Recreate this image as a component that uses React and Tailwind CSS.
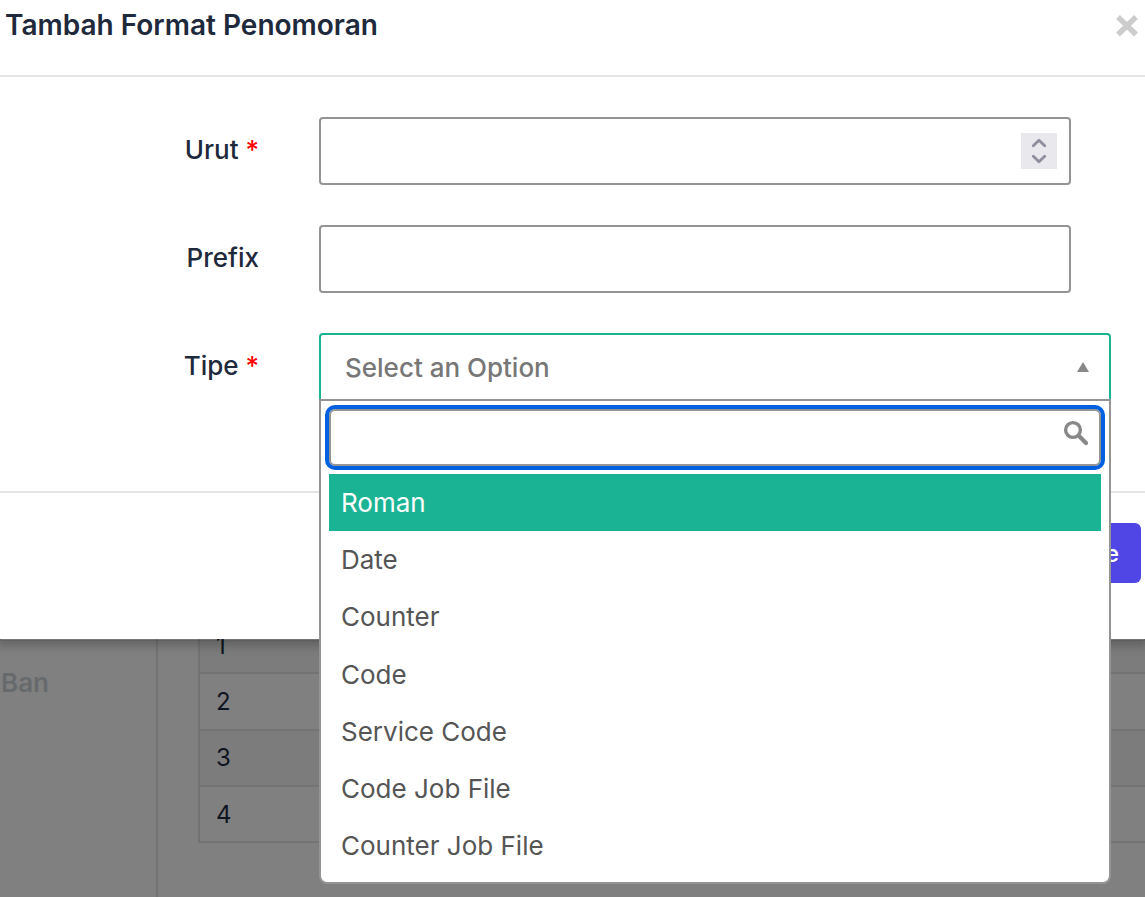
import React from 'react';

const options = ['Roman', 'Date', 'Counter', 'Code', 'Service Code', 'Code Job File', 'Counter Job File'];

function Label({ children, required }) {
  return (
    <div className="w-[259px] shrink-0 pt-[13px] text-right text-[26px] leading-[39px] font-medium whitespace-nowrap text-[#1e293b]">
      {children}
      {required && <span className="text-[#ff0000]"> *</span>}
    </div>
  );
}

function Stepper() {
  return (
    <div className="flex size-9 items-center justify-center bg-[#e9e9ed]">
      <svg width="36" height="36" viewBox="0 0 36 36" fill="none" stroke="#8f8f9d" strokeWidth="2.9" strokeLinecap="round" strokeLinejoin="round">
        <path d="M12.3 12.8 18 7.3 23.7 12.8" />
        <path d="M12.3 23.2 18 28.7 23.7 23.2" />
      </svg>
    </div>
  );
}

function Dropdown() {
  return (
    <div className="absolute top-[66px] left-0 z-10 h-[485px] w-[792px] rounded-b-[8px] border-2 border-[#949494] bg-white px-2 pt-2">
      <div className="flex h-[57px] items-start justify-end rounded-[6px] border-2 border-[#949494] pt-[9px] pr-[10px] outline-4 outline-[#0061e0]">
        <svg width="26" height="26" viewBox="0 0 26 26" fill="none" stroke="#888888">
          <circle cx="10" cy="10" r="7.4" strokeWidth="3.4" />
          <path d="M16 16 23 23" strokeWidth="4.2" strokeLinecap="round" />
        </svg>
      </div>
      <ul className="mt-2">
        {options.map((name, i) => (
          <li
            key={name}
            className={
              i === 0
                ? 'h-[57.2px] bg-[#1ab394] pl-3 text-[26px] leading-[57px] text-white'
                : 'h-[57.2px] pl-3 text-[26px] leading-[57px] text-[#555555]'
            }
          >
            {name}
          </li>
        ))}
      </ul>
    </div>
  );
}

export default function App() {
  return (
    <div className="flex h-[897px] w-[1145px] flex-col overflow-hidden bg-[#808080] font-[Inter,sans-serif]">
      <div className="relative z-10 flex h-[641px] shrink-0 flex-col border-b-2 border-black/5 bg-white bg-clip-padding shadow-[0_0_10px_4px_rgba(0,0,0,0.25)]">
        <header className="flex h-[77px] shrink-0 items-start justify-between border-b-2 border-[#e5e5e5] pt-[4px] pr-[7px] pl-[5px]">
          <h1 className="text-[28px] leading-[42px] font-semibold whitespace-nowrap text-[#1e293b]">Tambah Format Penomoran</h1>
          <svg className="mt-[11px]" width="22" height="22" viewBox="0 0 22 22" fill="none" stroke="#cccccc" strokeWidth="5.4">
            <path d="M2 2 20 19.5M20 2 2 19.5" />
          </svg>
        </header>
        <main className="flex h-[416px] shrink-0 flex-col gap-10 border-b-2 border-[#e5e5e5] pt-10">
          <div className="flex gap-[60px]">
            <Label required>Urut</Label>
            <div className="flex h-[68px] w-[752px] items-center justify-end rounded-[4px] border-2 border-[#949494] pr-3">
              <Stepper />
            </div>
          </div>
          <div className="flex gap-[60px]">
            <Label>Prefix</Label>
            <div className="h-[68px] w-[752px] rounded-[4px] border-2 border-[#949494]" />
          </div>
          <div className="flex gap-[60px]">
            <Label required>Tipe</Label>
            <div className="relative h-[68px] w-[792px]">
              <div className="flex h-[68px] items-center justify-between rounded-t-[4px] border-2 border-[#1ab394] pr-5 pl-6">
                <span className="text-[26px] leading-[39px] font-medium text-[#777777]">Select an Option</span>
                <svg width="12" height="10" viewBox="0 0 12 10">
                  <path d="M6 0 12 10H0Z" fill="#888888" />
                </svg>
              </div>
              <Dropdown />
            </div>
          </div>
        </main>
        <footer className="flex justify-end pt-[30px] pr-1">
          <button className="h-[60px] rounded-[6px] bg-[#4f46e5] px-[22px] pt-[2px] text-[24px] font-medium text-white">Save</button>
        </footer>
      </div>

      <div className="-mt-[2px] flex h-[258px] shrink-0">
        <aside className="w-[158px] shrink-0 border-r-2 border-[#737373] pt-[24px] pl-px text-[26px] leading-[39px] font-semibold text-[#676a6c]">
          Ban
        </aside>
        <div className="flex-1 pl-10">
          <div className="border-l-2 border-[#737373] text-[24px] text-[#0f1520]">
            <div className="flex h-[35px] items-end border-b-2 border-[#737373] bg-[#7c7c7c] pb-[8px] pl-4 leading-[36px]">1</div>
            <div className="flex h-[57px] items-center border-b-2 border-[#737373] pl-4">2</div>
            <div className="flex h-[56px] items-center border-b-2 border-[#737373] bg-[#7c7c7c] pl-4">3</div>
            <div className="flex h-[56px] items-center border-b-2 border-[#737373] pt-[2px] pl-4">4</div>
          </div>
        </div>
      </div>
    </div>
  );
}
